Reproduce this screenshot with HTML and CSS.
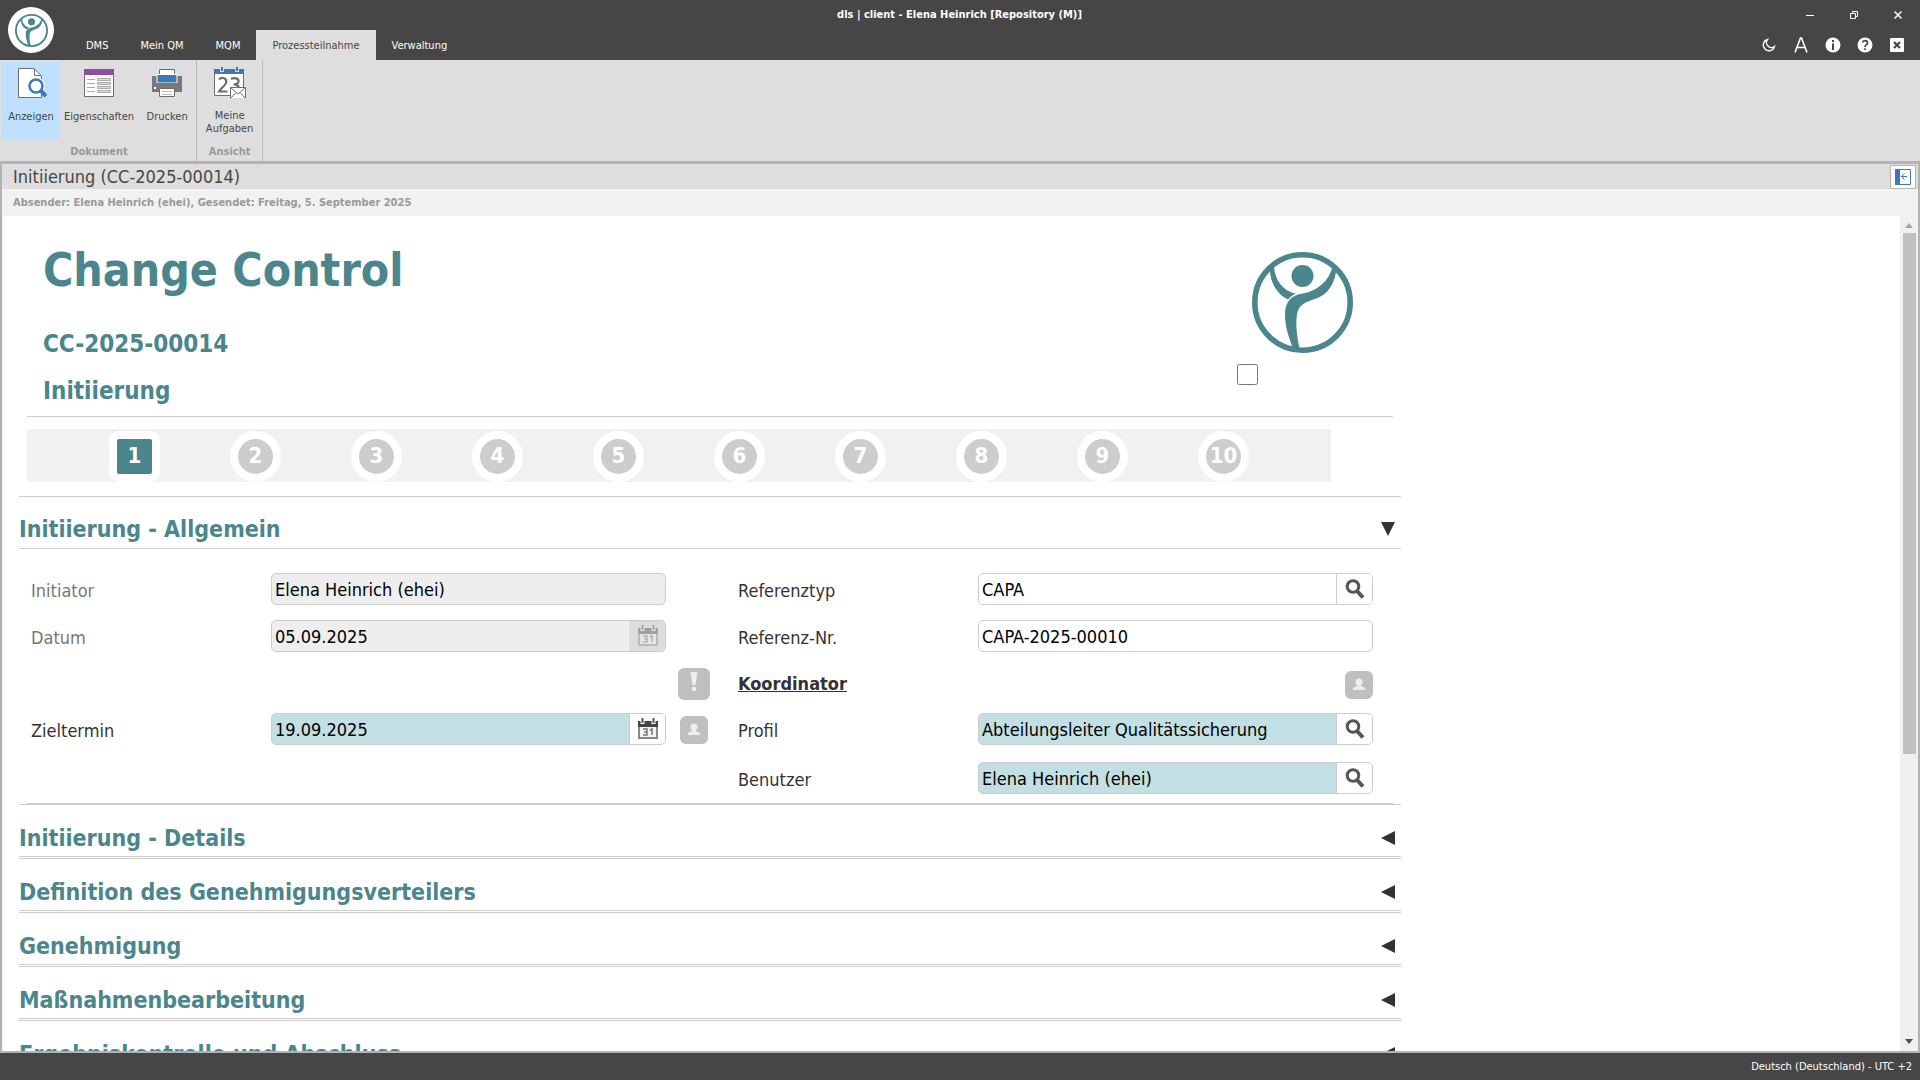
FILE: index.html
```html
<!DOCTYPE html>
<html lang="de">
<head>
<meta charset="UTF-8">
<meta name="viewport" content="width=device-width, initial-scale=1.0">
<title>dls | client - Elena Heinrich [Repository (M)]</title>
<link rel="stylesheet" href="styles.css">
</head>
<body>

<svg class="sprite" width="0" height="0" aria-hidden="true">
  <defs>
    <symbol id="logo" viewBox="0 0 101 101">
      <circle cx="50.5" cy="50.5" r="47.7" fill="none" stroke="currentColor" stroke-width="5.6"/>
      <circle cx="50.5" cy="24" r="11" fill="currentColor"/>
      <path fill="currentColor" d="M18 17L22 15C23 28 31 39 43.500 41.500C40.500 43 38.500 45 36 47.500C25 42 18 31 18 17Z"/>
      <path fill="currentColor" d="M80.500 15L84 20C82 33 75 43 63 47C54 50 48 52 45.500 60C43 70 45 84 47.500 97L41 97C37 84 33 77 33 62C33 50 39 43 51 41.500C65 39 77 29 80.500 15Z"/>
    </symbol>
    <symbol id="search" viewBox="0 0 20 20">
      <circle cx="8" cy="7.500" r="5.800" fill="none" stroke="#555" stroke-width="3"/>
      <path d="M12 12L18 18.500" stroke="#555" stroke-width="4"/>
    </symbol>
    <symbol id="calendar" viewBox="0 0 22 22">
      <path d="M1 3H21V21H1Z" fill="#888"/>
      <path d="M1 3H21V9H1Z" fill="#444"/>
      <path d="M3 9H19V19H3Z" fill="#f4f4f4"/>
      <path d="M5.500 0V6M16.500 0V6" stroke="#fff" stroke-width="4"/>
      <path d="M5.500 0V5M16.500 0V5" stroke="#555" stroke-width="2"/>
      <path d="M6 11H10V17H6M7 14H10M13 12L15 11V17" fill="none" stroke="#777" stroke-width="1.500"/>
    </symbol>
    <symbol id="person" viewBox="0 0 14 14">
      <circle cx="7" cy="4" r="3.500" fill="#eee"/>
      <path d="M5 6H9V8L13 10V12H1V10L5 8Z" fill="#eee"/>
    </symbol>
  </defs>
</svg>

<header class="titlebar">
  <div class="app-logo"><svg width="33" height="33"><use href="#logo"/></svg></div>
  <div class="titlebar-main">
    <div class="window-title">dls | client - Elena Heinrich [Repository (M)]</div>
    <nav class="tabs">
      <a href="#" class="tab">DMS</a>
      <a href="#" class="tab">Mein QM</a>
      <a href="#" class="tab">MQM</a>
      <a href="#" class="tab active">Prozessteilnahme</a>
      <a href="#" class="tab">Verwaltung</a>
    </nav>
  </div>
  <div class="titlebar-side">
    <div class="window-buttons">
      <button type="button" aria-label="Minimieren"><svg width="10" height="10"><path d="M1 5.500H9" stroke="#fff"/></svg></button>
      <button type="button" aria-label="Wiederherstellen"><svg width="10" height="10" fill="none" stroke="#fff"><path d="M1.500 3.500H6.500V8.500H1.500ZM3.500 3V1.500H8.500V6.500H7"/></svg></button>
      <button type="button" aria-label="Schließen"><svg width="10" height="10"><path d="M1.500 1.500L8.500 8.500M8.500 1.500L1.500 8.500" stroke="#fff" stroke-width="1.500"/></svg></button>
    </div>
    <div class="tool-buttons">
      <button type="button" aria-label="Dunkelmodus"><svg width="16" height="16"><path d="M6.500 2.500A5.700 5.700 0 1 0 13.500 9.500A5 5 0 0 1 6.500 2.500Z" fill="none" stroke="#fff" stroke-width="1.300"/></svg></button>
      <button type="button" aria-label="Schrift"><svg width="16" height="16"><path d="M2 15.500L7.500 1H8.500L14 15.500M4 10.500H12" fill="none" stroke="#fff" stroke-width="1.600"/></svg></button>
      <button type="button" aria-label="Info"><svg width="16" height="16"><circle cx="8" cy="8" r="7.500" fill="#fff"/><path d="M8 6.500V13M8 3V5" stroke="#464646" stroke-width="2"/></svg></button>
      <button type="button" aria-label="Hilfe"><svg width="16" height="16"><circle cx="8" cy="8" r="7.500" fill="#fff"/><path d="M5.500 5.500C6 3 10.500 3 10.500 6C10.500 8 8 7.700 8 10M8 11.200V13" fill="none" stroke="#464646" stroke-width="1.700"/></svg></button>
      <button type="button" aria-label="Beenden"><svg width="16" height="16"><rect x="1" y="1" width="14" height="14" rx="1" fill="#fff"/><path d="M5 5L11 11M11 5L5 11" stroke="#464646" stroke-width="2.200"/></svg></button>
    </div>
  </div>
</header>

<div class="ribbon">
  <section class="ribbon-group">
    <div class="ribbon-buttons">
      <button type="button" class="ribbon-button selected">
        <svg width="32" height="32"><path d="M3.500 1.500H19L26.500 9V30.500H3.500Z" fill="#fff" stroke="#6d6d6d"/><path d="M19.500 2V8.500H26" fill="none" stroke="#6d6d6d"/><circle cx="21" cy="19" r="9" fill="#fff"/><circle cx="21" cy="19" r="6.500" fill="#fff" stroke="#3d79b8" stroke-width="2.500"/><path d="M25.500 23.500L31 29" stroke="#3d79b8" stroke-width="4"/></svg>
        <span>Anzeigen</span>
      </button>
      <button type="button" class="ribbon-button">
        <svg width="32" height="32"><path d="M1.500 2.500H30.500V29.500H1.500Z" fill="#fff" stroke="#6d6d6d"/><path d="M1 2H31V8H1Z" fill="#8f4fa0"/><path d="M4 12.500H12M4 16.500H12M4 20.500H12M4 24.500H12" stroke="#aaa"/><path d="M14.500 11.500H27.500V13.500H14.500ZM14.500 15.500H27.500V17.500H14.500ZM14.500 19.500H27.500V21.500H14.500ZM14.500 23.500H27.500V25.500H14.500Z" fill="#ddd" stroke="#aaa"/></svg>
        <span>Eigenschaften</span>
      </button>
      <button type="button" class="ribbon-button">
        <svg width="32" height="32"><path d="M8.500 2.500H23.500V9H8.500Z" fill="#fff" stroke="#6d6d6d"/><path d="M1 9H31V25H1Z" fill="#797979"/><path d="M5.500 7H26.500V16H5.500Z" fill="#fff"/><path d="M6.500 8H25.500V15.500H6.500Z" fill="#3d79b8"/><path d="M3 20H5V22H3Z" fill="#fff"/><path d="M8.500 21.500H23.500V29.500H8.500Z" fill="#fff" stroke="#6d6d6d"/><path d="M11 24.500H21M11 27.500H21" stroke="#bbb"/></svg>
        <span>Drucken</span>
      </button>
    </div>
    <div class="ribbon-caption">Dokument</div>
  </section>
  <section class="ribbon-group">
    <div class="ribbon-buttons">
      <button type="button" class="ribbon-button wide">
        <svg width="34" height="32"><path d="M1.500 2.500H30.500V28.500H1.500Z" fill="#fff" stroke="#6d6d6d"/><path d="M1 2H31V7H1Z" fill="#3d79b8"/><path d="M9 0V5M24 0V5" stroke="#dedede" stroke-width="4"/><path d="M9 0V4M24 0V4" stroke="#6d6d6d" stroke-width="2"/><path d="M6 12.500C9 9.500 14.500 11 13 16C12 19 8 21 6 24.500H14.500M18 12C21 10.500 26 11 25.500 14.500C25 17 23 17.500 20.500 17.500C23 17.500 26 18 26 21.500C25 25.500 21 25.500 18 24.500" fill="none" stroke="#6d6d6d" stroke-width="2.200"/><path d="M17.500 20.500H32.500V31.500H17.500Z" fill="#fff" stroke="#6d6d6d"/><path d="M17.500 20.500L25 27L32.500 20.500M17.500 31.500L23 25.500M32.500 31.500L27 25.500" fill="none" stroke="#6d6d6d"/></svg>
        <span>Meine<br>Aufgaben</span>
      </button>
    </div>
    <div class="ribbon-caption">Ansicht</div>
  </section>
</div>

<main class="document">
  <div class="document-title">
    <span>Initiierung (CC-2025-00014)</span>
    <button type="button" class="panel-toggle" aria-label="Bereich einblenden"><svg width="16" height="16"><path d="M.5 .5H15.500V15.500H.5Z" fill="#fff" stroke="#3d79b8"/><path d="M0 0H5V16H0Z" fill="#3d79b8"/><path d="M6.500 7.500H12M9.500 4.500L6.500 7.500L9.500 10.500" fill="none" stroke="#3d79b8"/></svg></button>
  </div>
  <div class="document-info">Absender: Elena Heinrich (ehei), Gesendet: Freitag, 5. September 2025</div>

  <div class="viewport">
    <form class="form">
      <div class="form-head">
        <div>
          <h1>Change Control</h1>
          <h2>CC-2025-00014</h2>
          <h2>Initiierung</h2>
        </div>
        <div class="form-brand">
          <svg width="101" height="101"><use href="#logo"/></svg>
          <input type="checkbox" class="check" aria-label="Auswahl">
        </div>
      </div>

      <ol class="steps">
        <li class="current">1</li>
        <li>2</li>
        <li>3</li>
        <li>4</li>
        <li>5</li>
        <li>6</li>
        <li>7</li>
        <li>8</li>
        <li>9</li>
        <li>10</li>
      </ol>

      <div class="section open">
        <h2>Initiierung - Allgemein</h2>
        <button type="button" class="toggle" aria-label="Zuklappen"><svg width="14" height="14"><path d="M0 0H14L7 14Z" fill="#333"/></svg></button>
      </div>

      <div class="fields">
        <label for="initiator" class="muted">Initiator</label>
        <div class="field readonly"><input id="initiator" type="text" value="Elena Heinrich (ehei)" readonly></div>
        <div></div>
        <label for="referenztyp">Referenztyp</label>
        <div class="field"><input id="referenztyp" type="text" value="CAPA"><button type="button" aria-label="Suchen"><svg width="20" height="20"><use href="#search"/></svg></button></div>

        <label for="datum" class="muted">Datum</label>
        <div class="field readonly"><input id="datum" type="text" value="05.09.2025" readonly><button type="button" aria-label="Kalender" disabled><svg width="22" height="22"><use href="#calendar"/></svg></button></div>
        <div></div>
        <label for="referenznr">Referenz-Nr.</label>
        <div class="field"><input id="referenznr" type="text" value="CAPA-2025-00010"></div>

        <div></div>
        <div></div>
        <div class="side"><button type="button" class="badge alert" aria-label="Pflichtfeld"><svg width="10" height="24"><path d="M1.500 0H8.500L6.500 13H3.500Z" fill="#eee"/><circle cx="5" cy="17" r="2.300" fill="#eee"/></svg></button></div>
        <strong class="subhead">Koordinator</strong>
        <div class="side end"><button type="button" class="badge" aria-label="Benutzer übernehmen"><svg width="14" height="14"><use href="#person"/></svg></button></div>

        <label for="zieltermin">Zieltermin</label>
        <div class="field required"><input id="zieltermin" type="text" value="19.09.2025"><button type="button" aria-label="Kalender"><svg width="22" height="22"><use href="#calendar"/></svg></button></div>
        <div class="side"><button type="button" class="badge" aria-label="Benutzer"><svg width="14" height="14"><use href="#person"/></svg></button></div>
        <label for="profil">Profil</label>
        <div class="field required"><input id="profil" type="text" value="Abteilungsleiter Qualitätssicherung"><button type="button" aria-label="Suchen"><svg width="20" height="20"><use href="#search"/></svg></button></div>

        <div></div>
        <div></div>
        <div></div>
        <label for="benutzer">Benutzer</label>
        <div class="field required"><input id="benutzer" type="text" value="Elena Heinrich (ehei)"><button type="button" aria-label="Suchen"><svg width="20" height="20"><use href="#search"/></svg></button></div>
      </div>

      <div class="section">
        <h2>Initiierung - Details</h2>
        <button type="button" class="toggle" aria-label="Aufklappen"><svg width="14" height="14"><path d="M14 0V14L0 7Z" fill="#333"/></svg></button>
      </div>
      <div class="section">
        <h2>Definition des Genehmigungsverteilers</h2>
        <button type="button" class="toggle" aria-label="Aufklappen"><svg width="14" height="14"><path d="M14 0V14L0 7Z" fill="#333"/></svg></button>
      </div>
      <div class="section">
        <h2>Genehmigung</h2>
        <button type="button" class="toggle" aria-label="Aufklappen"><svg width="14" height="14"><path d="M14 0V14L0 7Z" fill="#333"/></svg></button>
      </div>
      <div class="section">
        <h2>Maßnahmenbearbeitung</h2>
        <button type="button" class="toggle" aria-label="Aufklappen"><svg width="14" height="14"><path d="M14 0V14L0 7Z" fill="#333"/></svg></button>
      </div>
      <div class="section">
        <h2>Ergebniskontrolle und Abschluss</h2>
        <button type="button" class="toggle" aria-label="Aufklappen"><svg width="14" height="14"><path d="M14 0V14L0 7Z" fill="#333"/></svg></button>
      </div>
    </form>

    <div class="scrollbar">
      <svg width="8" height="5"><path d="M0 5L4 0L8 5Z" fill="#a3a3a3"/></svg>
      <div class="track"><div class="thumb"></div></div>
      <svg width="8" height="5"><path d="M0 0H8L4 5Z" fill="#505050"/></svg>
    </div>
  </div>
</main>

<footer class="statusbar">Deutsch (Deutschland) - UTC +2</footer>

</body>
</html>
```
FILE: styles.css
```css
* {
  box-sizing: border-box;
}

body {
  display: flex;
  flex-direction: column;
  height: 100vh;
  margin: 0;
  overflow: hidden;
  background-color: #464646;
  color: #464646;
  font-family: Tahoma, "DejaVu Sans Condensed", "Noto Sans", sans-serif;
  font-size: 11px;
}

button {
  display: flex;
  align-items: center;
  justify-content: center;
  margin: 0;
  padding: 0;
  border: 0;
  background: none;
  color: inherit;
  font: inherit;
}

h1, h2 {
  margin: 0;
  color: #4a868c;
}

.sprite {
  position: absolute;
}

/* title bar */
.titlebar {
  display: flex;
  flex-shrink: 0;
  height: 60px;
  color: #fff;
}

.app-logo {
  display: flex;
  align-items: center;
  justify-content: center;
  width: 46px;
  height: 46px;
  margin: 7px 8px;
  border-radius: 50%;
  background-color: #fff;
  color: #4a868c;
}

.titlebar-main {
  flex: 1;
  display: flex;
  flex-direction: column;
}

.window-title {
  height: 30px;
  padding-left: 104px;
  line-height: 30px;
  font-weight: bold;
  text-align: center;
}

.tabs {
  display: flex;
  padding-left: 8px;
}

.tab {
  height: 30px;
  padding: 0 16px;
  line-height: 32px;
  color: #fff;
  text-decoration: none;
}

.tab.active {
  background-color: #dedede;
  color: #464646;
}

.titlebar-side {
  display: flex;
  flex-direction: column;
  align-items: flex-end;
}

.window-buttons,
.tool-buttons {
  display: flex;
  height: 30px;
}

.window-buttons button {
  width: 44px;
}

.tool-buttons {
  padding-right: 7px;
}

.tool-buttons button {
  width: 32px;
}

/* ribbon */
.ribbon {
  display: flex;
  flex-shrink: 0;
  height: 104px;
  padding-left: 2px;
  border-bottom: 3px solid #b3b3b3;
  background-color: #dedede;
}

.ribbon-group {
  display: flex;
  flex-direction: column;
  border-right: 1px solid #b9b9b9;
}

.ribbon-buttons {
  display: flex;
  padding-top: 2px;
}

.ribbon-button {
  flex-direction: column;
  justify-content: flex-start;
  gap: 11px;
  min-width: 58px;
  height: 78px;
  padding: 5px 4px;
  line-height: 13px;
}

.ribbon-button.wide {
  min-width: 65px;
}

.ribbon-button.selected {
  background-color: #c0e0ff;
}

.ribbon-caption {
  color: #999;
  font-weight: bold;
  line-height: 23px;
  text-align: center;
}

/* document */
.document {
  flex: 1;
  display: flex;
  flex-direction: column;
  min-height: 0;
  border: 2px solid #b3b3b3;
  border-top: 0;
}

.document-title {
  display: flex;
  align-items: center;
  justify-content: space-between;
  height: 25px;
  padding: 0 2px 0 11px;
  background-color: #dedede;
  font-size: 18px;
  line-height: 24px;
}

.panel-toggle {
  width: 26px;
  height: 24px;
  border: 1px solid #b3b3b3;
  background-color: #fff;
}

.document-info {
  height: 27px;
  padding-left: 11px;
  background-color: #f2f2f2;
  color: #999;
  font-weight: bold;
  line-height: 28px;
}

.viewport {
  flex: 1;
  display: flex;
  justify-content: space-between;
  min-height: 0;
  border-left: 1px solid #f0f0f0;
  overflow: hidden;
  background-color: #fff;
}

.scrollbar {
  display: flex;
  flex-direction: column;
  align-items: center;
  gap: 5px;
  width: 18px;
  padding: 7px 0;
  background-color: #f0f0f0;
}

.track {
  flex: 1;
  width: 13px;
}

.thumb {
  height: 65%;
  background-color: #c0c0c0;
}

/* form */
.form {
  flex: 1;
  max-width: 1398px;
  padding-left: 16px;
  color: #333;
  font-size: 18px;
}

.form-head {
  display: flex;
  justify-content: space-between;
  height: 201px;
  margin: 0 8px;
  padding: 24px 40px 0 16px;
  border-bottom: 1px solid #ccc;
}

h1 {
  margin-bottom: 28px;
  font-size: 46px;
  line-height: 60px;
}

h2 {
  font-size: 23px;
  line-height: 32px;
}

.form-head h2 {
  margin-bottom: 15px;
  font-size: 24px;
}

.form-brand {
  display: flex;
  flex-direction: column;
  gap: 11px;
  width: 116px;
  padding-top: 12px;
  color: #4a868c;
}

.form-brand svg {
  align-self: flex-end;
}

.check {
  width: 21px;
  height: 21px;
  margin: 0;
}

.steps {
  display: flex;
  justify-content: space-between;
  margin: 12px 70px 14px 8px;
  padding: 2px 82px 0 82px;
  background-color: #f1f1f1;
  list-style: none;
}

.steps li {
  width: 51px;
  height: 51px;
  border: 8px solid #fff;
  border-radius: 50%;
  background-color: #cdcdcd;
  color: #fff;
  font-size: 22px;
  font-weight: bold;
  line-height: 33px;
  text-align: center;
}

.steps .current {
  border-radius: 10px;
  background-color: #4a868c;
}

.section {
  display: flex;
  align-items: center;
  justify-content: space-between;
  height: 53px;
  padding: 14px 6px 0 0;
  border-top: 1px solid #ccc;
  border-bottom: 1px solid #ccc;
}

.section + .section {
  margin-top: 1px;
}

.section.open {
  padding-top: 12px;
}

.fields {
  display: grid;
  grid-template-columns: 240px 1fr 72px 240px 1fr;
  grid-template-rows: 47px 48px 45px 49px 41px;
  align-items: start;
  margin: 24px 8px 0;
  padding: 0 20px 0 4px;
  border-bottom: 1px solid #ccc;
}

.fields label {
  line-height: 35px;
}

.subhead {
  line-height: 32px;
  text-decoration: underline;
}

.muted {
  color: #777;
}

.field {
  display: flex;
  height: 32px;
  border: 1px solid #ccc;
  border-radius: 5px;
  overflow: hidden;
  background-color: #fff;
}

.field input {
  flex: 1;
  min-width: 0;
  padding: 0 3px;
  border: 0;
  background: none;
  color: #000;
  font: inherit;
}

.field button {
  width: 36px;
  border-left: 1px solid #ccc;
  background-color: #fff;
}

.field.readonly {
  background-color: #eee;
}

.field.readonly button {
  border-color: #ddd;
  background-color: #ddd;
}

.field.readonly svg {
  opacity: 0.4;
}

.field.required {
  background-color: #c2dfe3;
}

.side {
  display: flex;
  padding-left: 12px;
}

.side.end {
  justify-content: flex-end;
}

.badge {
  width: 28px;
  height: 28px;
  margin: 3px 2px;
  border-radius: 6px;
  background-color: #bfbfbf;
}

.badge.alert {
  width: 32px;
  height: 32px;
  margin: 0;
}

.side.end .badge {
  margin-right: 0;
}

/* status bar */
.statusbar {
  flex-shrink: 0;
  height: 27px;
  padding-right: 8px;
  color: #fff;
  line-height: 28px;
  text-align: right;
}
```
